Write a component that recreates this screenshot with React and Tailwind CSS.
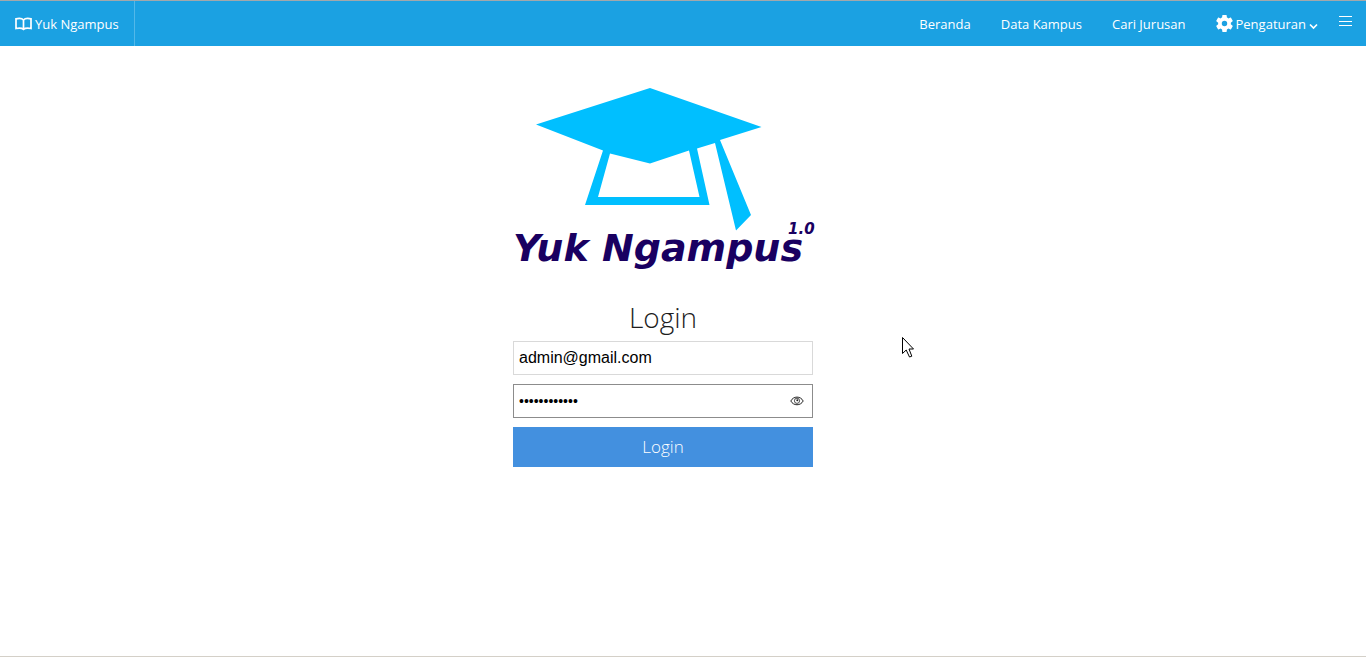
import React, { useState } from "react";

const navLinks = ["Beranda", "Data Kampus", "Cari Jurusan"];

function BookIcon() {
  return (
    <svg className="h-4 w-[17px]" viewBox="0 0 17 16" fill="none" stroke="currentColor" strokeWidth="1.700" aria-hidden="true">
      <path d="M8.500 4C7 2.200 4.500 2 1 2.800v9.700c3.400-.7 5.800-.6 7.500.8 1.700-1.400 4.100-1.500 7.500-.8V2.800C12.500 2 10 2.200 8.500 4zM8.500 4v9.300" />
    </svg>
  );
}

function GearIcon() {
  return (
    <svg className="size-[17px]" viewBox="2 2 20 20" fill="currentColor" aria-hidden="true">
      <path d="M19.430 12.980c.04-.32.070-.64.070-.98s-.03-.66-.07-.98l2.110-1.650c.19-.15.240-.42.120-.64l-2-3.460c-.12-.22-.39-.3-.61-.22l-2.490 1c-.52-.4-1.080-.73-1.690-.98l-.38-2.650C14.460 2.180 14.250 2 14 2h-4c-.25 0-.46.180-.49.420l-.38 2.650c-.61.250-1.170.590-1.690.980l-2.490-1c-.23-.09-.49 0-.61.220l-2 3.460c-.13.220-.07.490.120.640l2.110 1.650c-.04.320-.07.650-.07.980s.03.660.070.980l-2.110 1.650c-.19.150-.24.420-.12.640l2 3.460c.12.220.39.300.61.220l2.490-1c.52.400 1.080.730 1.690.980l.38 2.650c.03.240.24.420.49.420h4c.25 0 .46-.18.490-.42l.38-2.650c.61-.25 1.170-.59 1.690-.98l2.490 1c.23.090.49 0 .61-.22l2-3.460c.12-.22.070-.49-.12-.64l-2.110-1.650zM12 15.200a3.200 3.200 0 1 1 0-6.400 3.200 3.200 0 0 1 0 6.400z" />
    </svg>
  );
}

function Logo() {
  return (
    <svg className="w-full overflow-visible" viewBox="0 0 300 192" role="img" aria-label="Yuk Ngampus 1.0">
      <path
        fill="#00bfff"
        fillRule="evenodd"
        d="M137 3 248.500 42 207 55 238 130 223 145.500 202 58 184 63.500 196.500 120H72L90 65.500 23 39.500zM97 68.500 85 112H186.500L176 65.500 137 78.500z"
      />
      <g fill="#190061" fontFamily="'DejaVu Sans', sans-serif" fontWeight="bold" fontStyle="italic">
        <text x="0" y="176" fontSize="38">Yuk Ngampus</text>
        <text x="275" y="149" fontSize="15">1.0</text>
      </g>
    </svg>
  );
}

function Header() {
  return (
    <header className="flex h-[46px] items-stretch justify-between border-t border-[#a3a8ab] bg-[#1ba1e2] text-[13px] text-white">
      <a href="#home" className="flex items-center gap-[3px] border-r border-[#52b8e9] px-[15px]">
        <BookIcon />
        <span className="pt-0.5">Yuk Ngampus</span>
      </a>
      <nav className="flex items-stretch">
        {navLinks.map((label) => (
          <a key={label} href="#nav" className="flex items-center px-[15px] pt-0.5">{label}</a>
        ))}
        <button type="button" className="flex items-center gap-[3px] px-[15px]">
          <GearIcon />
          <span className="pt-0.5">Pengaturan</span>
          <svg className="mt-1 h-2 w-[9px]" viewBox="0 0 9 8" fill="none" stroke="currentColor" strokeWidth="1.7" aria-hidden="true">
            <path d="M1 2.500 4.500 6 8 2.500" />
          </svg>
        </button>
        <button type="button" aria-label="Menu" className="flex items-start pt-[14px] pr-[14px] pl-[6px]">
          <svg className="h-3 w-[13px]" viewBox="0 0 13 12" fill="none" stroke="currentColor" shapeRendering="crispEdges" aria-hidden="true">
            <path d="M0 1.500H13M0 6.500H13M0 10.500H13" />
          </svg>
        </button>
      </nav>
    </header>
  );
}

function LoginForm() {
  const [email, setEmail] = useState("admin@gmail.com");
  const [password, setPassword] = useState("kampusku1234");
  const [visible, setVisible] = useState(false);
  return (
    <form className="flex flex-col" onSubmit={(e) => e.preventDefault()}>
      <h1 className="mb-1.5 pt-[22px] text-center text-[28px] leading-9 font-light text-[#1d1d1d]">Login</h1>
      <input
        type="email"
        aria-label="Email"
        value={email}
        onChange={(e) => setEmail(e.target.value)}
        className="h-[34px] w-full border border-[#d9d9d9] px-[5px] font-['Liberation_Sans',sans-serif] text-base text-black outline-none"
      />
      <div className="mt-[9px] flex h-[34px] items-center border border-[#8c8c8c] pr-2 pl-[5px]">
        <input
          type={visible ? "text" : "password"}
          aria-label="Password"
          value={password}
          onChange={(e) => setPassword(e.target.value)}
          className="h-full min-w-0 flex-1 font-['Liberation_Sans',sans-serif] text-sm text-black outline-none"
        />
        <button type="button" aria-label="Show password" onClick={() => setVisible(!visible)}>
          <svg className="h-[10px] w-[14px]" viewBox="0 0 14 10" fill="none" stroke="#222" aria-hidden="true">
            <path d="M.8 5C3.500-.2 10.500-.2 13.200 5 10.500 10 3.500 10 .8 5z" />
            <circle cx="7" cy="4.800" r="2.600" strokeWidth=".8" />
            <circle cx="7.300" cy="4.300" r="1" fill="#222" stroke="none" />
          </svg>
        </button>
      </div>
      <button type="submit" className="mt-[9px] h-10 bg-[#4390df] text-[17px] font-light text-white">Login</button>
    </form>
  );
}

export default function App() {
  return (
    <div className="relative flex min-h-screen flex-col border-b border-[#d4d0c8] bg-white font-['Open_Sans','Noto_Sans',sans-serif]">
      <Header />
      <main className="flex flex-1 justify-center pt-[39px] pr-10">
        <div className="w-[300px]">
          <Logo />
          <LoginForm />
        </div>
      </main>
      <svg className="pointer-events-none absolute top-[337px] left-[902px] h-[21px] w-3" viewBox="0 0 12 21" aria-hidden="true">
        <path d="M.5.500V16.500L4.200 13 7.500 20 9.800 19.200 7 12H11.500z" fill="white" stroke="black" />
      </svg>
    </div>
  );
}
